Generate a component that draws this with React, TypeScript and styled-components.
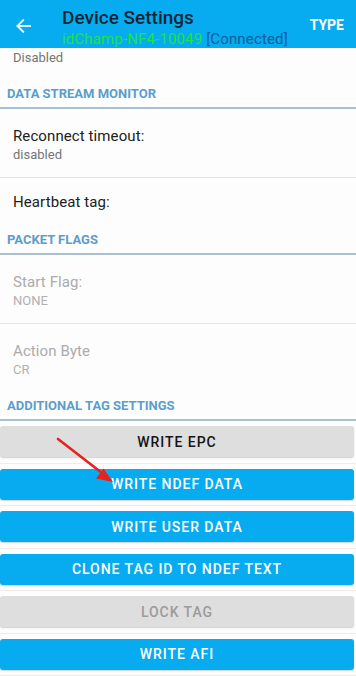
import React from "react";
import styled, { createGlobalStyle } from "styled-components";

const Global = createGlobalStyle`
  html, body { margin: 0; padding: 0; background: #fdfdfd; }
  body { font-family: Roboto, "Noto Sans", Arial, sans-serif; }
  * { box-sizing: border-box; }
`;

const Screen = styled.div`
  position: relative;
  width: 356px;
  height: 676px;
  overflow: hidden;
  display: flex;
  flex-direction: column;
  background: #fdfdfd;
`;

const Toolbar = styled.header`
  position: relative;
  z-index: 2;
  height: 48px;
  flex: 0 0 48px;
  background: #06acef;
  display: flex;
  align-items: flex-start;
  overflow: hidden;
`;

const BackButton = styled.div`
  width: 62px;
  height: 48px;
  display: flex;
  align-items: flex-start;
  padding: 19px 0 0 16px;
`;

const TitleBlock = styled.div`
  flex: 1;
  padding-top: 6.5px;
  display: flex;
  flex-direction: column;
  gap: 3px;
`;

const Title = styled.div`
  font-size: 19px;
  line-height: 22px;
  font-weight: 500;
  color: #0c2637;
  white-space: nowrap;
`;

const Subtitle = styled.div`
  font-size: 15px;
  line-height: 15px;
  letter-spacing: 0.15px;
  white-space: nowrap;
`;

const DeviceName = styled.span`
  color: #1fe33a;
`;

const Status = styled.span`
  color: #0f5d99;
`;

const Action = styled.div`
  padding: 17px 12px 0 0;
  font-size: 14px;
  line-height: 17px;
  font-weight: 700;
  color: #ffffff;
`;

const Scroller = styled.div`
  flex: 1;
  overflow: hidden;
  display: flex;
  flex-direction: column;
`;

const Item = styled.div<{ $divider?: boolean; $single?: boolean; $clipped?: boolean }>`
  padding: ${(p) =>
    p.$clipped ? "1px 13px 14px" : p.$single ? "14px 13px 14px" : "17px 13px 14px"};
  min-height: ${(p) => (p.$clipped ? "32px" : p.$single ? "48px" : "68px")};
  border-bottom: ${(p) => (p.$divider ? "1px solid #e6e6e6" : "none")};
  display: flex;
  flex-direction: column;
`;

const ItemTitle = styled.div<{ $disabled?: boolean }>`
  font-size: 15px;
  line-height: 20px;
  letter-spacing: 0.1px;
  color: ${(p) => (p.$disabled ? "#ababab" : "#212121")};
`;

const ItemSummary = styled.div<{ $disabled?: boolean }>`
  font-size: 13px;
  line-height: 17px;
  color: ${(p) => (p.$disabled ? "#b0b0b0" : "#757575")};
`;

const Category = styled.div`
  padding: 6px 7px 5px;
  border-bottom: 2px solid #a9c0d3;
  font-size: 13px;
  line-height: 16px;
  font-weight: 700;
  color: #5b9dcc;
`;

const ButtonRow = styled.div`
  padding: 5px 2px 5.5px 0;
  border-bottom: 1px solid #f1ebeb;
`;

const ActionButton = styled.div<{ $variant: "primary" | "neutral" | "disabled" }>`
  height: 31px;
  border-radius: 3px;
  display: flex;
  align-items: center;
  justify-content: center;
  font-size: 14px;
  font-weight: 500;
  letter-spacing: 0.95px;
  background: ${(p) => (p.$variant === "primary" ? "#06acef" : "#dedede")};
  color: ${(p) =>
    p.$variant === "primary" ? "#ffffff" : p.$variant === "neutral" ? "#141414" : "#9b9b9b"};
  box-shadow: 0 1px 1.5px rgba(0, 0, 0, 0.18);
`;

const Annotation = styled.svg`
  position: absolute;
  left: 0;
  top: 0;
  z-index: 3;
  pointer-events: none;
`;

const buttons: { label: string; variant: "primary" | "neutral" | "disabled" }[] = [
  { label: "WRITE EPC", variant: "neutral" },
  { label: "WRITE NDEF DATA", variant: "primary" },
  { label: "WRITE USER DATA", variant: "primary" },
  { label: "CLONE TAG ID TO NDEF TEXT", variant: "primary" },
  { label: "LOCK TAG", variant: "disabled" },
  { label: "WRITE AFI", variant: "primary" },
];

export default function App() {
  return (
    <>
      <Global />
      <Screen>
        <Toolbar>
          <BackButton>
            <svg width="15" height="14" viewBox="0 0 15 14" fill="none">
              <path
                d="M14.5 7H1.5M7.2 1.2L1.4 7l5.8 5.8"
                stroke="#e9f7fe"
                strokeWidth="1.9"
                strokeLinecap="square"
              />
            </svg>
          </BackButton>
          <TitleBlock>
            <Title>Device Settings</Title>
            <Subtitle>
              <DeviceName>idChamp-NF4-10049</DeviceName> <Status>[Connected]</Status>
            </Subtitle>
          </TitleBlock>
          <Action>TYPE</Action>
        </Toolbar>
        <Scroller>
          <Item $clipped>
            <ItemSummary>Disabled</ItemSummary>
          </Item>
          <Category>DATA STREAM MONITOR</Category>
          <Item $divider>
            <ItemTitle>Reconnect timeout:</ItemTitle>
            <ItemSummary>disabled</ItemSummary>
          </Item>
          <Item $single>
            <ItemTitle>Heartbeat tag:</ItemTitle>
          </Item>
          <Category>PACKET FLAGS</Category>
          <Item $divider>
            <ItemTitle $disabled>Start Flag:</ItemTitle>
            <ItemSummary $disabled>NONE</ItemSummary>
          </Item>
          <Item>
            <ItemTitle $disabled>Action Byte</ItemTitle>
            <ItemSummary $disabled>CR</ItemSummary>
          </Item>
          <Category>ADDITIONAL TAG SETTINGS</Category>
          {buttons.map((b) => (
            <ButtonRow key={b.label}>
              <ActionButton $variant={b.variant}>{b.label}</ActionButton>
            </ButtonRow>
          ))}
        </Scroller>
        <Annotation width="356" height="676" viewBox="0 0 356 676">
          <line x1="58" y1="439" x2="102" y2="473" stroke="#e8211e" strokeWidth="2.6" strokeLinecap="round" />
          <polygon points="113,482 96,478.5 103.5,468.5" fill="#e8211e" />
        </Annotation>
      </Screen>
    </>
  );
}
